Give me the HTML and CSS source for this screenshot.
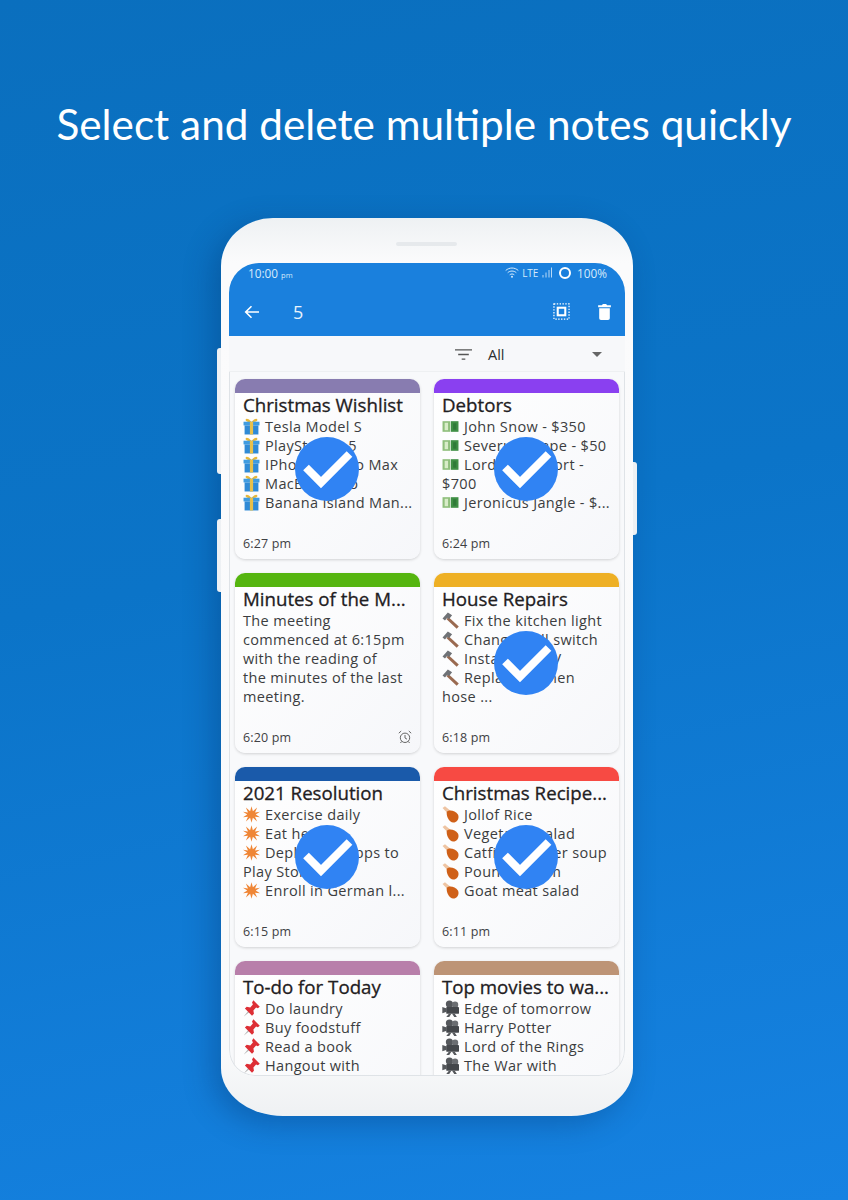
FILE: index.html
```html
<!DOCTYPE html>
<html lang="en">
<head>
<meta charset="utf-8">
<title>Select and delete multiple notes quickly</title>
<link rel="stylesheet" href="styles.css">
</head>
<body>
<svg class="defs" width="0" height="0" aria-hidden="true">
  <symbol id="gift" viewBox="0 0 16 16">
    <path d="M8 4C6 1 3 0 2.500 1.500 2 3 5 4 8 4ZM8 4c2-3 5-4 5.500-2.500C14 3 11 4 8 4Z" fill="#e8b83a"/>
    <rect x=".5" y="3.500" width="15" height="3.500" fill="#3f9be0"/>
    <rect x="1.500" y="7" width="13" height="8.500" fill="#2f8ad6"/>
    <rect x="6.500" y="3.500" width="3" height="12" fill="#e8c04a"/>
  </symbol>
  <symbol id="cash" viewBox="0 0 16 16">
    <rect x=".5" y="3" width="7.200" height="10" fill="#8fbf7c"/>
    <rect x="2.500" y="4.500" width="3.200" height="7" fill="#d8ecc8"/>
    <rect x="8.300" y="3" width="7.200" height="10" fill="#3f8f45"/>
    <rect x="10.500" y="5" width="3" height="6" fill="#2f7a38"/>
  </symbol>
  <symbol id="hammer" viewBox="0 0 16 16">
    <path d="M6 4.800 15.800 13.700 13.800 15.800 4.300 6.800Z" fill="#9a6a50"/>
    <path d="M.5 6 5.500.5 9.500 3 6.500 6.800 5 5.500 2.800 8Z" fill="#6f7276"/>
  </symbol>
  <symbol id="burst" viewBox="0 0 16 16">
    <path d="M8 .3 9.300 5 13.300 1.300 11.300 6 16 5.500 12 8 16 10.500 11.300 10 13.300 14.700 9.300 11 8 15.700 6.700 11 2.700 14.700 4.700 10 0 10.500 4 8 0 5.500 4.700 6 2.700 1.300 6.700 5Z" fill="#ef8636"/>
  </symbol>
  <symbol id="leg" viewBox="0 0 16 16">
    <path d="M.5 1.800 2.800.3 8 4.500 5.500 7Z" fill="#eec4a2"/>
    <path d="M4.500 5.300C7 3 12.500 4.300 15 8 16.700 11.500 14.300 15.800 10.500 15.600 6.500 15.300 3.800 9 4.500 5.300Z" fill="#cf6018"/>
  </symbol>
  <symbol id="pin" viewBox="0 0 16 16">
    <path d="M.5 15.800 6 9 7.300 10.300Z" fill="#b5b5b5"/>
    <path d="M9.800 .3 15.800 6.300 14 7.700 12.300 7 9.800 9.800 10.300 13 8.500 14.800 1.800 8 3.500 6.300 6.800 7 9.300 4.300 8.500 2.300Z" fill="#dd2e35"/>
  </symbol>
  <symbol id="movie" viewBox="0 0 16 16">
    <circle cx="7" cy="3.800" r="3.400" fill="#55585c"/>
    <circle cx="12.300" cy="4.500" r="3" fill="#6b6e72"/>
    <rect x="4" y="6.500" width="12" height="6.500" rx=".8" fill="#44474b"/>
    <path d="M4.500 8 .3 6.500v6l4.200-1.500Z" fill="#55585c"/>
    <path d="M6.500 13 4 16h2.800l2-3ZM12 13l2 3h-2.500l-2-3Z" fill="#55585c"/>
  </symbol>
  <symbol id="tick" viewBox="0 0 64 64">
    <path d="M11 30.500 26 45.500 54.500 17" fill="none" stroke="#fff" stroke-width="8"/>
  </symbol>
</svg>

<main class="page">
  <h1 class="headline">Select and delete multiple notes quickly</h1>

  <div class="phone">
    <span class="side side-left-a"></span>
    <span class="side side-left-b"></span>
    <span class="side side-right"></span>
    <div class="speaker"></div>

    <div class="screen">
      <div class="status">
        <span class="clock">10:00<small>pm</small></span>
        <span class="status-right">
          <svg class="wifi" viewBox="0 0 14 11"><path d="M.7 3.500C4.300.2 9.700.2 13.300 3.500M2.700 5.700C5.200 3.500 8.800 3.500 11.300 5.700M4.700 7.800C6 6.700 8 6.700 9.300 7.800" fill="none" stroke="#d6eafb" stroke-width="1"/><circle cx="7" cy="9.800" r="1" fill="#d6eafb"/></svg>
          <span class="lte">LTE</span>
          <svg class="bars" viewBox="0 0 10 11"><path d="M1 8v2.500M4 5.500v5M7 3v7.500M9.500 .5v10" stroke="#b9d9f6" stroke-width="1" fill="none"/></svg>
          <span class="ring"></span>
          <span class="battery">100%</span>
        </span>
      </div>

      <div class="appbar">
        <svg class="back" viewBox="0 0 16 14"><path d="M15 7H2M7.500 1.200 1.700 7l5.800 5.800" fill="none" stroke="#fff" stroke-width="1.600"/></svg>
        <span class="count">5</span>
        <svg class="select-all" viewBox="0 0 18 18"><rect x="1" y="1" width="16" height="16" fill="none" stroke="#fff" stroke-width="1.300" stroke-dasharray="1.500 1.500"/><rect x="5" y="5" width="8" height="8" fill="none" stroke="#fff" stroke-width="2.200"/></svg>
        <svg class="trash" viewBox="0 0 12 16"><path d="M0 2.200h3.500L4.500 1h3l1 1.200H12v1.700H0ZM1 5h10v9.300A1.700 1.700 0 0 1 9.300 16H2.700A1.700 1.700 0 0 1 1 14.300Z" fill="#fff"/></svg>
      </div>

      <div class="filter">
        <svg class="filter-icon" viewBox="0 0 16 10"><path d="M0 .7h16M3 5h10M6.300 9.300h3.400" stroke="#555" stroke-width="1.300" fill="none"/></svg>
        <span class="filter-label">All</span>
        <span class="caret"></span>
      </div>

      <div class="notes">
        <article class="card">
          <div class="bar bar-lilac"></div>
          <div class="card-main">
            <h2 class="title">Christmas Wishlist</h2>
            <div class="text">
              <div class="line"><svg class="emoji"><use href="#gift"/></svg>Tesla Model S</div>
              <div class="line"><svg class="emoji"><use href="#gift"/></svg>PlayStation 5</div>
              <div class="line"><svg class="emoji"><use href="#gift"/></svg>IPhone 12 Pro Max</div>
              <div class="line"><svg class="emoji"><use href="#gift"/></svg>MacBook Pro</div>
              <div class="line"><svg class="emoji"><use href="#gift"/></svg>Banana Island Man...</div>
            </div>
            <div class="foot"><span class="time">6:27 pm</span></div>
          </div>
          <div class="picked"><svg class="tick"><use href="#tick"/></svg></div>
        </article>

        <article class="card">
          <div class="bar bar-violet"></div>
          <div class="card-main">
            <h2 class="title">Debtors</h2>
            <div class="text">
              <div class="line"><svg class="emoji"><use href="#cash"/></svg>John Snow - $350</div>
              <div class="line"><svg class="emoji"><use href="#cash"/></svg>Severus Snape - $50</div>
              <div class="line"><svg class="emoji"><use href="#cash"/></svg>Lord Voldemort -</div>
              <div class="line">$700</div>
              <div class="line"><svg class="emoji"><use href="#cash"/></svg>Jeronicus Jangle - $...</div>
            </div>
            <div class="foot"><span class="time">6:24 pm</span></div>
          </div>
          <div class="picked"><svg class="tick"><use href="#tick"/></svg></div>
        </article>

        <article class="card">
          <div class="bar bar-green"></div>
          <div class="card-main">
            <h2 class="title">Minutes of the M...</h2>
            <div class="text">
              <div class="line">The meeting</div>
              <div class="line">commenced at 6:15pm</div>
              <div class="line">with the reading of</div>
              <div class="line">the minutes of the last</div>
              <div class="line">meeting.</div>
            </div>
            <div class="foot"><span class="time">6:20 pm</span>
              <svg class="alarm" viewBox="0 0 14 14"><circle cx="7" cy="7.800" r="4.700" fill="none" stroke="#666" stroke-width="1"/><path d="M7 5v3l2 1.200M.8 3.200 3.200 1M13.200 3.200 10.800 1M3.500 11.500l-1 1.500M10.500 11.500l1 1.500" fill="none" stroke="#666" stroke-width="1"/></svg>
            </div>
          </div>
        </article>

        <article class="card">
          <div class="bar bar-amber"></div>
          <div class="card-main">
            <h2 class="title">House Repairs</h2>
            <div class="text">
              <div class="line"><svg class="emoji"><use href="#hammer"/></svg>Fix the kitchen light</div>
              <div class="line"><svg class="emoji"><use href="#hammer"/></svg>Change wall switch</div>
              <div class="line"><svg class="emoji"><use href="#hammer"/></svg>Install new TV</div>
              <div class="line"><svg class="emoji"><use href="#hammer"/></svg>Replace kitchen</div>
              <div class="line">hose ...</div>
            </div>
            <div class="foot"><span class="time">6:18 pm</span></div>
          </div>
          <div class="picked"><svg class="tick"><use href="#tick"/></svg></div>
        </article>

        <article class="card">
          <div class="bar bar-navy"></div>
          <div class="card-main">
            <h2 class="title">2021 Resolution</h2>
            <div class="text">
              <div class="line"><svg class="emoji"><use href="#burst"/></svg>Exercise daily</div>
              <div class="line"><svg class="emoji"><use href="#burst"/></svg>Eat healthy</div>
              <div class="line"><svg class="emoji"><use href="#burst"/></svg>Deploy iOS apps to</div>
              <div class="line">Play Store</div>
              <div class="line"><svg class="emoji"><use href="#burst"/></svg>Enroll in German l...</div>
            </div>
            <div class="foot"><span class="time">6:15 pm</span></div>
          </div>
          <div class="picked"><svg class="tick"><use href="#tick"/></svg></div>
        </article>

        <article class="card">
          <div class="bar bar-red"></div>
          <div class="card-main">
            <h2 class="title">Christmas Recipe...</h2>
            <div class="text">
              <div class="line"><svg class="emoji"><use href="#leg"/></svg>Jollof Rice</div>
              <div class="line"><svg class="emoji"><use href="#leg"/></svg>Vegetable salad</div>
              <div class="line"><svg class="emoji"><use href="#leg"/></svg>Catfish pepper soup</div>
              <div class="line"><svg class="emoji"><use href="#leg"/></svg>Pounded yam</div>
              <div class="line"><svg class="emoji"><use href="#leg"/></svg>Goat meat salad</div>
            </div>
            <div class="foot"><span class="time">6:11 pm</span></div>
          </div>
          <div class="picked"><svg class="tick"><use href="#tick"/></svg></div>
        </article>

        <article class="card">
          <div class="bar bar-mauve"></div>
          <div class="card-main">
            <h2 class="title">To-do for Today</h2>
            <div class="text">
              <div class="line"><svg class="emoji"><use href="#pin"/></svg>Do laundry</div>
              <div class="line"><svg class="emoji"><use href="#pin"/></svg>Buy foodstuff</div>
              <div class="line"><svg class="emoji"><use href="#pin"/></svg>Read a book</div>
              <div class="line"><svg class="emoji"><use href="#pin"/></svg>Hangout with</div>
            </div>
          </div>
        </article>

        <article class="card">
          <div class="bar bar-tan"></div>
          <div class="card-main">
            <h2 class="title">Top movies to wa...</h2>
            <div class="text">
              <div class="line"><svg class="emoji"><use href="#movie"/></svg>Edge of tomorrow</div>
              <div class="line"><svg class="emoji"><use href="#movie"/></svg>Harry Potter</div>
              <div class="line"><svg class="emoji"><use href="#movie"/></svg>Lord of the Rings</div>
              <div class="line"><svg class="emoji"><use href="#movie"/></svg>The War with</div>
            </div>
          </div>
        </article>
      </div>
    </div>
  </div>
</main>
</body>
</html>
```

FILE: styles.css
```css
* { box-sizing: border-box; }

html, body { margin: 0; padding: 0; height: 100%; }

body {
  width: 848px;
  height: 1200px;
  overflow: hidden;
  font-family: "Open Sans", "Noto Sans", sans-serif;
  background: linear-gradient(168deg, #0a6fbe 0%, #0b74c8 45%, #1682e2 100%);
}

.defs { display: block; height: 0; }

.page {
  display: flex;
  flex-direction: column;
  align-items: center;
  height: 1200px;
}

.headline {
  margin: 92px 0 0;
  height: 64px;
  line-height: 64px;
  font-family: "Lato", "Open Sans", sans-serif;
  font-size: 42.300px;
  font-weight: 400;
  color: #fff;
  white-space: nowrap;
}

.phone {
  position: relative;
  margin: 62px 0 0 6px;
  width: 412px;
  height: 898px;
  padding: 45px 8px 40px;
  border-radius: 52px 52px 62px 62px / 48px 48px 48px 48px;
  background: linear-gradient(180deg, #eef1f3 0%, #fbfbfc 5%, #f9fafb 93%, #eff1f3 100%);
  box-shadow: -8px 8px 30px rgba(0, 40, 90, .3);
}

.side {
  position: absolute;
  width: 4px;
  background: #eef1f4;
}
.side-left-a { left: -4px; top: 130px; height: 126px; border-radius: 3px 0 0 3px; }
.side-left-b { left: -4px; top: 301px; height: 73px; border-radius: 3px 0 0 3px; }
.side-right { right: -4px; top: 244px; height: 73px; border-radius: 0 3px 3px 0; }

.speaker {
  position: absolute;
  top: 24px;
  left: 175px;
  width: 61px;
  height: 4px;
  border-radius: 2px;
  background: #e6e9ec;
}

.screen {
  position: relative;
  height: 813px;
  overflow: hidden;
  border-radius: 30px 30px 26px 26px;
  background: #f8f9fb;
}

.screen::after {
  content: "";
  position: absolute;
  top: 109px;
  left: 0;
  right: 0;
  bottom: 0;
  border: 1px solid #dfe3e7;
  border-top: 0;
  border-radius: 0 0 26px 26px;
  pointer-events: none;
}

.status {
  display: flex;
  align-items: center;
  justify-content: space-between;
  height: 18px;
  padding: 1px 18px 0 19px;
  background: #1a80dd;
  color: #d6eafb;
  font-size: 11.800px;
}
.clock small { font-size: 7.500px; margin-left: 3px; }
.status-right { display: flex; align-items: center; }
.wifi { width: 14px; height: 11px; }
.lte { font-size: 10px; margin-left: 3px; letter-spacing: -.2px; }
.bars { width: 10px; height: 11px; margin-left: 4px; }
.ring {
  width: 12px;
  height: 12px;
  margin-left: 7px;
  border: 2.500px solid #fff;
  border-radius: 50%;
}
.battery { margin-left: 6px; }

.appbar {
  display: flex;
  align-items: center;
  height: 55px;
  padding: 6px 0 0 15px;
  background: #1a80dd;
  color: #e9f3fc;
}
.back { width: 16px; height: 14px; }
.count { margin-left: 33px; font-size: 18px; }
.select-all { width: 17px; height: 17px; margin-left: auto; }
.trash { width: 13px; height: 17px; margin: 0 14px 0 28px; }

.filter {
  display: flex;
  align-items: center;
  height: 35px;
  margin-top: 1px;
  padding-left: 226px;
  background: #f7f8fa;
  border-bottom: 1px solid #eef0f2;
}
.filter-icon { width: 17px; height: 11px; }
.filter-label { margin-left: 16px; font-size: 14.500px; color: #2c2e30; }
.caret {
  margin: 0 23px 0 auto;
  border-style: solid;
  border-width: 5px 5px 0;
  border-color: #666 transparent transparent;
}

.notes {
  display: grid;
  grid-template-columns: 185px 185px;
  grid-auto-rows: 180px;
  gap: 14px;
  padding: 7px 0 0 6px;
}

.card {
  position: relative;
  display: flex;
  flex-direction: column;
  border-radius: 10px;
  background: linear-gradient(135deg, #ffffff 0%, #f6f7fa 100%);
  box-shadow: 0 1px 3px rgba(0, 0, 0, .16);
}

.bar { height: 14px; flex: none; border-radius: 10px 10px 0 0; }
.bar-lilac { background: #887cb0; }
.bar-violet { background: #8a40f0; }
.bar-green { background: #55b50f; }
.bar-amber { background: #eeb025; }
.bar-navy { background: #1a5aaa; }
.bar-red { background: #f74a43; }
.bar-mauve { background: #b87faa; }
.bar-tan { background: #bd9476; }

.card-main {
  display: flex;
  flex-direction: column;
  flex: 1;
  padding: 0 8px 6px;
}

.title {
  margin: 0;
  height: 24px;
  line-height: 24px;
  font-size: 18.700px;
  font-weight: 500;
  -webkit-text-stroke: .3px #1f2022;
  color: #1f2022;
  white-space: nowrap;
}

.text {
  font-size: 14.500px;
  line-height: 19px;
  letter-spacing: .34px;
  color: #3b3d40;
}

.line {
  display: flex;
  align-items: center;
  height: 19px;
  white-space: pre;
}

.emoji { width: 17px; height: 17px; flex: none; margin-right: 5px; }

.foot {
  display: flex;
  align-items: center;
  justify-content: space-between;
  margin-top: auto;
  height: 20px;
}
.time { font-size: 12.500px; color: #3f4144; letter-spacing: .15px; }
.alarm { width: 14px; height: 14px; }

.picked {
  position: absolute;
  top: 58px;
  left: 60px;
  width: 64px;
  height: 64px;
  border-radius: 50%;
  background: #3083f3;
}
.tick { display: block; width: 64px; height: 64px; }
```
